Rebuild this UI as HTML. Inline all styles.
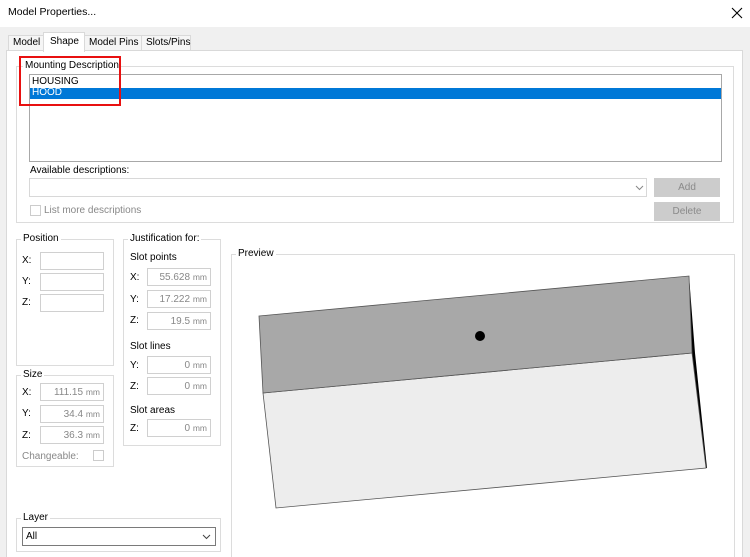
<!DOCTYPE html>
<html style="overflow:hidden;width:750px;height:557px"><head><meta charset="utf-8"><style>
*{margin:0;padding:0;box-sizing:border-box}
body{width:750px;height:557px;position:relative;overflow:hidden;background:#fff;font-family:"Liberation Sans",sans-serif;font-size:10px;color:#000;white-space:nowrap}
.a{position:absolute}
.gb{position:absolute;border:1px solid #dcdcdc}
.lg{position:absolute;background:#fff;padding:0 2px;top:-7px;left:4px;line-height:12px}
.in{position:absolute;border:1px solid #d0d0d0;background:#fff;height:18px;color:#888;text-align:right;padding-right:3px;line-height:16px}
.in span{font-size:8.5px}
.lb{position:absolute;line-height:12px}
</style></head><body>
<div class="a" style="left:8px;top:6px;font-size:10.5px">Model Properties...</div>
<svg class="a" style="left:731px;top:7px" width="12" height="12"><path d="M1 1L11 11M11 1L1 11" stroke="#000" stroke-width="1.1"/></svg>
<div class="a" style="left:0;top:27px;width:750px;height:530px;background:#f0f0f0"></div>
<div class="a" style="left:8px;top:35px;width:36px;height:16px;border:1px solid #d9d9d9;background:#f5f5f5;line-height:14px;padding-left:4px">Model</div>
<div class="a" style="left:84px;top:35px;width:58px;height:16px;border:1px solid #d9d9d9;background:#f5f5f5;line-height:14px;padding-left:4px">Model Pins</div>
<div class="a" style="left:141px;top:35px;width:50px;height:16px;border:1px solid #d9d9d9;background:#f5f5f5;line-height:14px;padding-left:4px">Slots/Pins</div>
<div class="a" style="left:6px;top:50px;width:737px;height:507px;background:#fff;border:1px solid #d9d9d9;border-bottom:none"></div>
<div class="a" style="left:43px;top:32px;width:42px;height:20px;border:1px solid #d9d9d9;border-bottom:none;background:#fff;line-height:18px;padding-left:6px">Shape</div>
<div class="gb" style="left:16px;top:66px;width:718px;height:157px"><div class="lg" style="left:6px">Mounting Description</div></div>
<div class="a" style="left:29px;top:74px;width:693px;height:88px;border:1px solid #a8a8a8;background:#fff"></div>
<div class="lb" style="left:32px;top:76px">HOUSING</div>
<div class="a" style="left:30px;top:88px;width:691px;height:11px;background:#0078d7"></div>
<div class="lb" style="left:32px;top:87px;color:#fff">HOOD</div>
<div class="a" style="left:19px;top:56px;width:102px;height:50px;border:2px solid #e81010"></div>
<div class="lb" style="left:30px;top:165px">Available descriptions:</div>
<div class="a" style="left:29px;top:178px;width:618px;height:19px;border:1px solid #d8d8d8;background:#fff"></div>
<svg class="a" style="left:635px;top:185px" width="9" height="6"><path d="M1 1L4.5 4.5L8 1" stroke="#888" fill="none"/></svg>
<div class="a" style="left:654px;top:178px;width:66px;height:19px;background:#cccccc;color:#8a8a8a;text-align:center;line-height:19px">Add</div>
<div class="a" style="left:654px;top:202px;width:66px;height:19px;background:#cccccc;color:#8a8a8a;text-align:center;line-height:19px">Delete</div>
<div class="a" style="left:30px;top:205px;width:11px;height:11px;border:1px solid #ccc"></div>
<div class="lb" style="left:44px;top:205px;color:#888">List more descriptions</div>
<div class="gb" style="left:16px;top:239px;width:98px;height:127px"><div class="lg">Position</div></div>
<div class="lb" style="left:22px;top:255px">X:</div><div class="in" style="left:40px;top:252px;width:64px"></div>
<div class="lb" style="left:22px;top:276px">Y:</div><div class="in" style="left:40px;top:273px;width:64px"></div>
<div class="lb" style="left:22px;top:297px">Z:</div><div class="in" style="left:40px;top:294px;width:64px"></div>
<div class="gb" style="left:16px;top:375px;width:98px;height:92px"><div class="lg">Size</div></div>
<div class="lb" style="left:22px;top:387px">X:</div><div class="in" style="left:40px;top:383px;width:64px">111.15 <span>mm</span></div>
<div class="lb" style="left:22px;top:408px">Y:</div><div class="in" style="left:40px;top:405px;width:64px">34.4 <span>mm</span></div>
<div class="lb" style="left:22px;top:430px">Z:</div><div class="in" style="left:40px;top:426px;width:64px">36.3 <span>mm</span></div>
<div class="lb" style="left:22px;top:451px;color:#888">Changeable:</div>
<div class="a" style="left:93px;top:450px;width:11px;height:11px;border:1px solid #ccc"></div>
<div class="gb" style="left:123px;top:239px;width:98px;height:207px"><div class="lg">Justification for:</div></div>
<div class="lb" style="left:130px;top:252px">Slot points</div>
<div class="lb" style="left:130px;top:272px">X:</div><div class="in" style="left:147px;top:268px;width:64px">55.628 <span>mm</span></div>
<div class="lb" style="left:130px;top:294px">Y:</div><div class="in" style="left:147px;top:290px;width:64px">17.222 <span>mm</span></div>
<div class="lb" style="left:130px;top:315px">Z:</div><div class="in" style="left:147px;top:312px;width:64px">19.5 <span>mm</span></div>
<div class="lb" style="left:130px;top:341px">Slot lines</div>
<div class="lb" style="left:130px;top:360px">Y:</div><div class="in" style="left:147px;top:356px;width:64px">0 <span>mm</span></div>
<div class="lb" style="left:130px;top:381px">Z:</div><div class="in" style="left:147px;top:377px;width:64px">0 <span>mm</span></div>
<div class="lb" style="left:130px;top:405px">Slot areas</div>
<div class="lb" style="left:130px;top:423px">Z:</div><div class="in" style="left:147px;top:419px;width:64px">0 <span>mm</span></div>
<div class="gb" style="left:16px;top:518px;width:205px;height:34px"><div class="lg">Layer</div></div>
<div class="a" style="left:22px;top:527px;width:194px;height:19px;border:1px solid #7a7a7a;background:#fff;line-height:17px;padding-left:3px">All</div>
<svg class="a" style="left:202px;top:534px" width="9" height="6"><path d="M1 1L4.5 4.5L8 1" stroke="#444" fill="none"/></svg>
<div class="gb" style="left:231px;top:254px;width:504px;height:303px;border-bottom:none"><div class="lg" style="left:4px">Preview</div></div>
<svg class="a" style="left:0;top:0" width="750" height="557">
<polygon points="689,276 695,353 707,468 706,468 692,353" fill="#000"/>
<polygon points="263,393 692,353 706,468 276,508" fill="#ededed" stroke="#555" stroke-width="0.8"/>
<polygon points="259,316 689,276 692,353 263,393" fill="#a8a8a8" stroke="#555" stroke-width="0.8"/>
<circle cx="480" cy="336" r="5" fill="#000"/>
</svg>
</body></html>
